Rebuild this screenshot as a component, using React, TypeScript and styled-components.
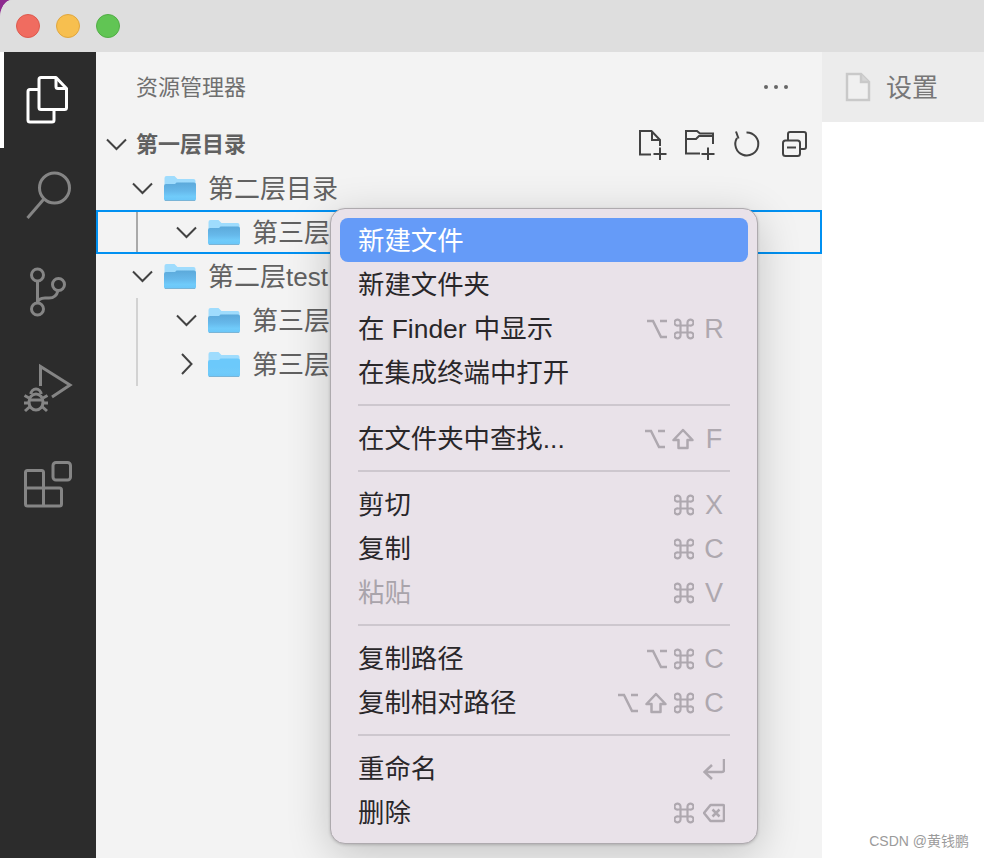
import React from 'react';
import styled, { createGlobalStyle } from 'styled-components';

const GlobalStyle = createGlobalStyle`
  html, body, #root {
    margin: 0;
    height: 100%;
  }
  body {
    background: #8d2a8f;
    font-family: "Liberation Sans", "Noto Sans CJK SC", sans-serif;
    overflow: hidden;
  }
`;

const Window = styled.div`
  height: 100vh;
  display: flex;
  flex-direction: column;
  border-top-left-radius: 12px 18px;
  overflow: hidden;
  background: #dedede;
`;

const TitleBar = styled.div`
  height: 52px;
  flex: none;
  display: flex;
  align-items: center;
  gap: 16px;
  padding-left: 16px;
  background: #dedede;
`;

const Light = styled.span<{ $fill: string; $edge: string }>`
  width: 24px;
  height: 24px;
  box-sizing: border-box;
  border-radius: 50%;
  background: ${(p) => p.$fill};
  border: 1px solid ${(p) => p.$edge};
`;

const Body = styled.div`
  flex: 1;
  display: flex;
  min-height: 0;
`;

const ActivityBar = styled.div`
  width: 96px;
  flex: none;
  background: #2c2c2c;
`;

const ActivityItem = styled.div<{ $active?: boolean }>`
  height: 96px;
  color: ${(p) => (p.$active ? '#ffffff' : '#858585')};
  box-shadow: ${(p) => (p.$active ? 'inset 4px 0 0 #ffffff' : 'none')};
  svg {
    display: block;
  }
`;

const Sidebar = styled.div`
  width: 726px;
  flex: none;
  position: relative;
  overflow: hidden;
  background: #f3f3f3;
`;

const SidebarHeader = styled.div`
  height: 70px;
  display: flex;
  align-items: center;
  justify-content: space-between;
  padding: 0 34px 0 40px;
  font-size: 22px;
  color: #6f6f6f;
`;

// CJK glyphs sit low in their line box, so labels get lifted a little
const Label = styled.span`
  margin-bottom: 4px;
`;

const SectionRow = styled.div`
  height: 44px;
  display: flex;
  align-items: center;
  padding: 0 12px 0 8px;
  font-size: 22px;
  font-weight: 700;
  color: #616161;
`;

const SectionTitle = styled(Label)`
  flex: 1;
  margin-left: 8px;
`;

const Toolbar = styled.div`
  display: flex;
  gap: 15px;
  color: #424242;
`;

const TreeRow = styled.div<{ $level: number; $selected?: boolean; $guide?: string }>`
  height: 44px;
  box-sizing: border-box;
  display: flex;
  align-items: center;
  padding-left: ${(p) => (p.$level === 3 ? 76 : 32)}px;
  font-size: 26px;
  color: #616161;
  border: 2px solid ${(p) => (p.$selected ? '#0090f1' : 'transparent')};
  background: ${(p) =>
    p.$guide ? `linear-gradient(${p.$guide}, ${p.$guide}) 40px 0 / 2px 100% no-repeat border-box` : 'none'};
  background-origin: border-box;
`;

const Chevron = styled.svg`
  width: 24px;
  height: 24px;
  flex: none;
  color: #424242;
`;

const FolderGlyph = styled.svg`
  width: 34px;
  height: 28px;
  flex: none;
  margin: 0 11px 0 9px;
`;

const Editor = styled.div`
  flex: 1;
  background: #ffffff;
`;

const Tab = styled.div`
  height: 70px;
  display: flex;
  align-items: center;
  gap: 15px;
  padding-left: 23px;
  background: #ececec;
  font-size: 26px;
  color: #777777;
`;

const Menu = styled.div`
  position: absolute;
  left: 234px;
  top: 156px;
  width: 428px;
  height: 636px;
  box-sizing: border-box;
  padding: 9px;
  background: #e9e2e9;
  border: 1px solid #aeaaae;
  border-radius: 15px;
  box-shadow: 0 1px 3px rgba(0, 0, 0, 0.18), 0 10px 44px rgba(0, 0, 0, 0.2);
`;

const MenuItem = styled.div<{ $highlight?: boolean; $disabled?: boolean }>`
  height: 44px;
  display: flex;
  align-items: center;
  justify-content: space-between;
  padding: 0 24px 0 18px;
  border-radius: 8px;
  font-size: 26.4px;
  background: ${(p) => (p.$highlight ? '#659bf8' : 'transparent')};
  color: ${(p) => (p.$highlight ? '#ffffff' : p.$disabled ? '#a9a4ab' : '#29272a')};
`;

const Separator = styled.div`
  height: 2px;
  margin: 10px 18px;
  background: #cdc7ce;
`;

const Shortcut = styled.span`
  display: flex;
  align-items: center;
  gap: 7px;
  margin-top: 2px;
  color: #aea8af;
`;

const KeyLetter = styled.span`
  width: 20px;
  margin-left: 3px;
  text-align: center;
  font-size: 27px;
`;

const KeyIcon = styled.svg<{ $wide?: boolean }>`
  width: ${(p) => (p.$wide ? 22 : 20)}px;
  height: 22px;
  display: block;
`;

const EdgeKeyIcon = styled.svg`
  width: 22px;
  height: 22px;
  display: block;
  margin: 0 -1px 0 2px;
`;

const Watermark = styled.div`
  position: absolute;
  right: 15px;
  bottom: 8px;
  font-size: 14px;
  color: #9b9b9b;
`;

const line = { fill: 'none', stroke: 'currentColor', strokeWidth: 3 };
const thin = { fill: 'none', stroke: 'currentColor', strokeWidth: 2 };

const FilesIcon = () => (
  <svg width="96" height="96" viewBox="0 0 96 96" {...line} strokeLinejoin="round">
    <path d="M41 25.500h15l10.500 11v19a2 2 0 0 1-2 2H41a2 2 0 0 1-2-2v-28a2 2 0 0 1 2-2z" />
    <path d="M56 25.500v9a2 2 0 0 0 2 2h8.500" />
    <path d="M39 37.500h-9a2 2 0 0 0-2 2V68a2 2 0 0 0 2 2h22a2 2 0 0 0 2-2V57.500" />
  </svg>
);

const SearchIcon = () => (
  <svg width="96" height="96" viewBox="0 0 96 96" {...line}>
    <circle cx="54.500" cy="40" r="15" />
    <path d="M43.500 51.500L27.500 70" />
  </svg>
);

const GitIcon = () => (
  <svg width="96" height="96" viewBox="0 0 96 96" {...line}>
    <circle cx="37.500" cy="31" r="6" />
    <circle cx="58.500" cy="40.500" r="6" />
    <circle cx="37.500" cy="65" r="6" />
    <path d="M37.500 37v22" />
    <path d="M58 46.500c-1 4.500-4 7.500-9 7.500h-4c-4 0-7 2-7.500 5" />
  </svg>
);

const DebugIcon = () => (
  <svg width="96" height="96" viewBox="0 0 96 96" {...line}>
    <path d="M40.500 46V26.500L70 45 52 57" />
    <ellipse cx="36" cy="62" rx="7" ry="8" />
    <path d="M31 54a5 5 0 0 1 10 0" />
    <path d="M29 60h14" />
    <path d="M24.500 55.500l4.500 2.500M47.500 55.500L43 58M24 63h5M48 63h-5M25 71l5-4.500M47 71l-5-4.500" />
  </svg>
);

const ExtensionsIcon = () => (
  <svg width="96" height="96" viewBox="0 0 96 96" {...line} strokeLinejoin="round">
    <rect x="53" y="26.500" width="17.500" height="17.500" rx="3" />
    <path d="M27.500 34.500h14a2 2 0 0 1 2 2V52h16a2 2 0 0 1 2 2v14a2 2 0 0 1-2 2h-32a2 2 0 0 1-2-2V36.500a2 2 0 0 1 2-2z" />
    <path d="M25.500 52h18v18" />
  </svg>
);

const MoreIcon = () => (
  <svg width="24" height="6" viewBox="0 0 24 6" fill="#666666">
    <circle cx="2" cy="3" r="2" />
    <circle cx="12" cy="3" r="2" />
    <circle cx="22" cy="3" r="2" />
  </svg>
);

const NewFileIcon = () => (
  <svg width="32" height="32" viewBox="0 0 32 32" {...thin}>
    <path d="M14 26.500H3V3h11.500L23 12v6" />
    <path d="M15 3v9h8" />
    <path d="M23 19.500v12.500M16.500 26h13" />
  </svg>
);

const NewFolderIcon = () => (
  <svg width="32" height="32" viewBox="0 0 32 32" {...thin}>
    <path d="M16 25.500H2V3h11l3 2.500h13V16" />
    <path d="M2 11h10l3-3h14" />
    <path d="M24 19.500v12.500M17.500 26h13" />
  </svg>
);

const RefreshIcon = () => (
  <svg width="32" height="32" viewBox="0 0 32 32" {...thin}>
    <path d="M15.500 4.500A11.500 11.500 0 1 1 6 10" />
    <path d="M5 3.500l2.500 7" />
  </svg>
);

const CollapseIcon = () => (
  <svg width="32" height="32" viewBox="0 0 32 32" {...thin} strokeLinejoin="round">
    <path d="M10 12.500V6a2 2 0 0 1 2-2h14a2 2 0 0 1 2 2v13a2 2 0 0 1-2 2h-4" />
    <rect x="5" y="12.500" width="17" height="15.500" rx="2.500" />
    <path d="M9 19.500h9" />
  </svg>
);

const ChevronDown = () => (
  <Chevron viewBox="0 0 24 24" {...thin}>
    <path d="M3 7.500l9.500 9.500L22 7.500" />
  </Chevron>
);

const ChevronRight = () => (
  <Chevron viewBox="0 0 24 24" {...thin}>
    <path d="M8 2l9.500 10L8 22" />
  </Chevron>
);

const Folder = ({ open, id }: { open?: boolean; id: string }) => (
  <FolderGlyph viewBox="0 0 34 28">
    <defs>
      <linearGradient id={id} x1="0" y1="0" x2="0" y2="1">
        <stop offset="0" stopColor={open ? '#5ca9da' : '#6cc9fb'} />
        <stop offset="0.45" stopColor={open ? '#66b8ea' : '#6cc9fb'} />
        <stop offset="0.75" stopColor="#70cbfa" />
        <stop offset="1" stopColor="#6ac6f8" />
      </linearGradient>
    </defs>
    <path d="M1.500 4a2 2 0 0 1 2-2h8l3 3h16a2 2 0 0 1 2 2v6h-31z" fill="#9fdcfd" />
    <path d="M1 12a2 2 0 0 1 2-2h9l1.500-1.500H31a2 2 0 0 1 2 2V25a2 2 0 0 1-2 2H3a2 2 0 0 1-2-2z" fill={`url(#${id})`} />
    <path d="M2 26.500h30" stroke="#7ab4d6" strokeWidth="1" />
  </FolderGlyph>
);

const OptionKey = () => (
  <KeyIcon viewBox="0 0 20 22" fill="none" stroke="currentColor" strokeWidth="2.500">
    <path d="M0 3h6l8 16h6M13 3h7" />
  </KeyIcon>
);

const CommandKey = () => (
  <KeyIcon viewBox="0 0 20 22" fill="none" stroke="currentColor" strokeWidth="2.200">
    <path d="M6.500 7.500h7v7h-7zM6.500 7.500H4.200a3 3 0 1 1 2.300-3V17.500a3 3 0 1 1-2.300-3h11.600a3 3 0 1 1-2.300 3V4.500a3 3 0 1 1 2.300 3z" />
  </KeyIcon>
);

const ShiftKey = () => (
  <KeyIcon $wide viewBox="0 0 22 22" fill="none" stroke="currentColor" strokeWidth="2.500" strokeLinejoin="round">
    <path d="M11 2L1.500 12h5v8h9v-8h5z" />
  </KeyIcon>
);

const ReturnKey = () => (
  <EdgeKeyIcon viewBox="0 0 22 22" fill="none" stroke="currentColor" strokeWidth="2.500">
    <path d="M21 1v11a2 2 0 0 1-2 2H2M9 7l-7.500 7L9 21" />
  </EdgeKeyIcon>
);

const DeleteKey = () => (
  <EdgeKeyIcon viewBox="0 0 22 22" fill="none" stroke="currentColor" strokeWidth="2.500" strokeLinejoin="round">
    <path d="M7.500 3H20a1 1 0 0 1 1 1v14a1 1 0 0 1-1 1H7.500L1 11z" />
    <path d="M9.500 7.500l7 7M16.500 7.500l-7 7" />
  </EdgeKeyIcon>
);

const FileTabIcon = () => (
  <svg width="26" height="30" viewBox="0 0 26 30" fill="#f0f0f0" stroke="#c9c9c9" strokeWidth="2.500">
    <path d="M2 2h14l8 8v18H2z" />
    <path d="M16 2v8h8" fill="#d5d5d5" />
  </svg>
);

const App: React.FC = () => {
  return (
    <Window>
      <GlobalStyle />
      <TitleBar>
        <Light $fill="#f06c60" $edge="#dc5a4e" />
        <Light $fill="#f7bf4f" $edge="#dfa63f" />
        <Light $fill="#61c554" $edge="#52ad46" />
      </TitleBar>
      <Body>
        <ActivityBar>
          <ActivityItem $active><FilesIcon /></ActivityItem>
          <ActivityItem><SearchIcon /></ActivityItem>
          <ActivityItem><GitIcon /></ActivityItem>
          <ActivityItem><DebugIcon /></ActivityItem>
          <ActivityItem><ExtensionsIcon /></ActivityItem>
        </ActivityBar>
        <Sidebar>
          <SidebarHeader>
            <Label>资源管理器</Label>
            <MoreIcon />
          </SidebarHeader>
          <SectionRow>
            <ChevronDown />
            <SectionTitle>第一层目录</SectionTitle>
            <Toolbar>
              <NewFileIcon />
              <NewFolderIcon />
              <RefreshIcon />
              <CollapseIcon />
            </Toolbar>
          </SectionRow>
          <TreeRow $level={2}>
            <ChevronDown />
            <Folder open id="f1" />
            <Label>第二层目录</Label>
          </TreeRow>
          <TreeRow $level={3} $selected $guide="#a9a9a9">
            <ChevronDown />
            <Folder open id="f2" />
            <Label>第三层</Label>
          </TreeRow>
          <TreeRow $level={2}>
            <ChevronDown />
            <Folder open id="f3" />
            <Label>第二层test</Label>
          </TreeRow>
          <TreeRow $level={3} $guide="#d2d2d2">
            <ChevronDown />
            <Folder open id="f4" />
            <Label>第三层</Label>
          </TreeRow>
          <TreeRow $level={3} $guide="#d2d2d2">
            <ChevronRight />
            <Folder id="f5" />
            <Label>第三层</Label>
          </TreeRow>
          <Menu>
            <MenuItem $highlight><Label>新建文件</Label></MenuItem>
            <MenuItem><Label>新建文件夹</Label></MenuItem>
            <MenuItem>
              <Label>在 Finder 中显示</Label>
              <Shortcut><OptionKey /><CommandKey /><KeyLetter>R</KeyLetter></Shortcut>
            </MenuItem>
            <MenuItem><Label>在集成终端中打开</Label></MenuItem>
            <Separator />
            <MenuItem>
              <Label>在文件夹中查找...</Label>
              <Shortcut><OptionKey /><ShiftKey /><KeyLetter>F</KeyLetter></Shortcut>
            </MenuItem>
            <Separator />
            <MenuItem>
              <Label>剪切</Label>
              <Shortcut><CommandKey /><KeyLetter>X</KeyLetter></Shortcut>
            </MenuItem>
            <MenuItem>
              <Label>复制</Label>
              <Shortcut><CommandKey /><KeyLetter>C</KeyLetter></Shortcut>
            </MenuItem>
            <MenuItem $disabled>
              <Label>粘贴</Label>
              <Shortcut><CommandKey /><KeyLetter>V</KeyLetter></Shortcut>
            </MenuItem>
            <Separator />
            <MenuItem>
              <Label>复制路径</Label>
              <Shortcut><OptionKey /><CommandKey /><KeyLetter>C</KeyLetter></Shortcut>
            </MenuItem>
            <MenuItem>
              <Label>复制相对路径</Label>
              <Shortcut><OptionKey /><ShiftKey /><CommandKey /><KeyLetter>C</KeyLetter></Shortcut>
            </MenuItem>
            <Separator />
            <MenuItem>
              <Label>重命名</Label>
              <Shortcut><ReturnKey /></Shortcut>
            </MenuItem>
            <MenuItem>
              <Label>删除</Label>
              <Shortcut><CommandKey /><DeleteKey /></Shortcut>
            </MenuItem>
          </Menu>
        </Sidebar>
        <Editor>
          <Tab>
            <FileTabIcon />
            <Label>设置</Label>
          </Tab>
        </Editor>
      </Body>
      <Watermark>CSDN @黄钱鹏</Watermark>
    </Window>
  );
};

export default App;
